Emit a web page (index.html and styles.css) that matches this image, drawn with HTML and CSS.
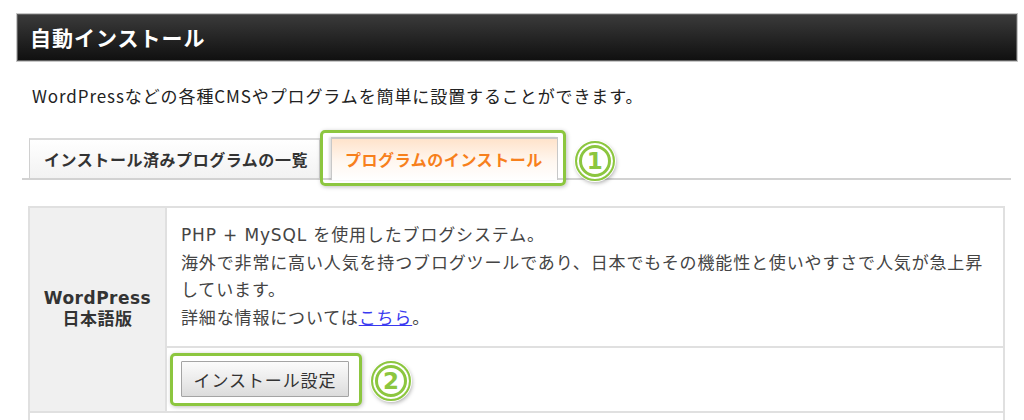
FILE: index.html
```html
<!DOCTYPE html>
<html lang="ja">
<head>
<meta charset="utf-8">
<title>自動インストール</title>
<link rel="stylesheet" href="styles.css">
</head>
<body>
<div class="page">
  <div class="titlebar"><h1>自動インストール</h1></div>
  <p class="lead">WordPressなどの各種CMSやプログラムを簡単に設置することができます。</p>
  <div class="tabs">
    <div class="tab">インストール済みプログラムの一覧</div>
    <div class="tab active">プログラムのインストール<span class="hl"></span></div>
    <span class="num">1</span>
  </div>
  <table class="prog">
    <tr>
      <th rowspan="2">WordPress<br>日本語版</th>
      <td class="desc">PHP + MySQL を使用したブログシステム。<br>海外で非常に高い人気を持つブログツールであり、日本でもその機能性と使いやすさで人気が急上昇しています。<br>詳細な情報については<a href="#">こちら</a>。</td>
    </tr>
    <tr>
      <td class="act"><span class="btnwrap"><button type="button">インストール設定</button><span class="hl"></span></span><span class="num">2</span></td>
    </tr>
    <tr class="next">
      <td colspan="2"></td>
    </tr>
  </table>
</div>
</body>
</html>
```
FILE: styles.css
```css
html, body {
  margin: 0;
  padding: 0;
  background: #fff;
}
body {
  font-family: "Noto Sans CJK JP", sans-serif;
  color: #222;
}
.page {
  padding: 14px 7px 0 17px;
}
.titlebar {
  width: 1000px;
  height: 47px;
  box-sizing: border-box;
  border: 1px solid #5e5e5e;
  box-shadow: 0 0 0 1px #c8c8c8;
  background: linear-gradient(#3a3a3a, #101010);
  display: flex;
  align-items: center;
  padding-left: 12px;
}
.titlebar h1 {
  margin: 0;
  font-size: 21px;
  font-weight: bold;
  color: #fff;
  letter-spacing: 1px;
  line-height: 1;
}
.lead {
  margin: 23px 0 0 15px;
  font-size: 17px;
  letter-spacing: 0.9px;
  line-height: 24px;
  color: #222;
}
.tabs {
  display: flex;
  align-items: flex-end;
  margin: 29px 0 0 5px;
  width: 989px;
  padding-left: 7px;
  box-sizing: border-box;
  border-bottom: 2px solid #d2d2d2;
  height: 43px;
}
.tab {
  position: relative;
  box-sizing: border-box;
  height: 40px;
  border: 1px solid #d0d0d0;
  border-top: 2px solid #dadada;
  border-bottom: none;
  background: linear-gradient(#ffffff, #f2f2f2);
  font-family: "Noto Sans CJK JP", sans-serif;
  font-weight: bold;
  font-size: 16px;
  letter-spacing: 0.55px;
  color: #333;
  display: flex;
  align-items: center;
  padding: 0 11px 0 14px;
}
.tab.active {
  margin-left: 11px;
  height: 43px;
  margin-bottom: -2px;
  color: #f7801c;
  border-color: #c8c8c8;
  box-shadow: -2px 0 2px rgba(0,0,0,0.12);
  background: linear-gradient(#ffe3cb, #fff7f0 55%, #ffffff);
  padding: 0 14px 2px 13px;
}
.hl {
  position: absolute;
  border: 3px solid #8cc63f;
  border-radius: 5px;
  box-shadow: 1px 1px 4px rgba(0,0,0,0.25);
  pointer-events: none;
}
.tab.active .hl {
  top: -9px;
  left: -12px;
  right: -9px;
  bottom: -6px;
}
.num {
  box-sizing: border-box;
  width: 40px;
  height: 40px;
  border-radius: 50%;
  border: 2px solid #8cc63f;
  box-shadow: inset 0 0 0 2px #fff, inset 0 0 0 5px #8cc63f, 0 0 0 1px #fff, 1px 2px 4px rgba(0,0,0,0.35);
  background: #fff;
  color: #8cc63f;
  font-family: "DejaVu Sans", sans-serif;
  font-weight: bold;
  font-size: 23px;
  line-height: 1;
  display: flex;
  align-items: center;
  justify-content: center;
  text-shadow: 0 0 1px #fff;
}
.tabs .num {
  margin: 0 0 -1px 17px;
  align-self: center;
  position: relative;
  top: 3px;
}
.prog {
  margin: 26px 0 0 11px;
  width: 977px;
  border-collapse: collapse;
  font-family: "DejaVu Sans", "Noto Sans CJK JP", sans-serif;
}
.prog th, .prog td {
  border: 2px solid #e0e0e0;
  padding: 0;
}
.prog th {
  width: 135px;
  background: #f0f0f0;
  color: #333;
  font-size: 17px;
  letter-spacing: 0.5px;
  line-height: 21px;
  font-weight: bold;
  text-align: center;
  vertical-align: middle;
}
.prog td.desc {
  font-family: "DejaVu Sans", "Noto Sans CJK JP", sans-serif;
  font-size: 17px;
  letter-spacing: 0.85px;
  line-height: 27.7px;
  color: #444;
  padding: 14px 15px 13px 14px;
  vertical-align: top;
}
.prog td.desc a {
  color: #3939f0;
  text-decoration: underline;
}
.prog td.act {
  height: 65px;
  box-sizing: border-box;
  padding: 0 14px;
  vertical-align: middle;
}
.act {
  white-space: nowrap;
}
.btnwrap {
  position: relative;
  display: inline-block;
  vertical-align: middle;
}
.btnwrap button {
  display: block;
  box-sizing: border-box;
  height: 36px;
  width: 168px;
  border: 1px solid #a4a4a4;
  border-radius: 1px;
  background: linear-gradient(#fbfbfb, #e9e9e9 60%, #dcdcdc);
  font-family: "Noto Sans CJK JP", sans-serif;
  font-size: 17px;
  letter-spacing: 0.9px;
  color: #333;
  padding: 0;
  margin: 0;
}
.btnwrap .hl {
  top: -8px;
  left: -11px;
  right: -13px;
  bottom: -9px;
}
.act .num {
  display: inline-flex;
  vertical-align: middle;
  margin-left: 22px;
  position: relative;
  top: 2px;
}
.prog tr.next td {
  height: 12px;
}
```
